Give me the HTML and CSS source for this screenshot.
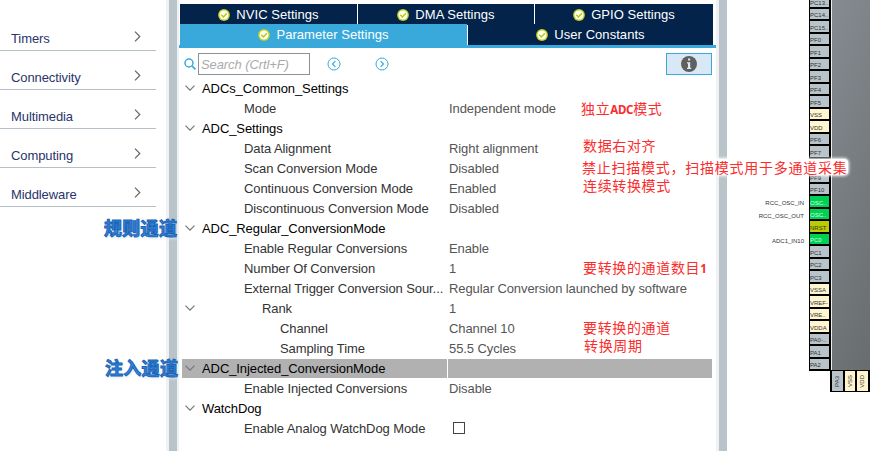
FILE: index.html
```html
<!DOCTYPE html>
<html lang="en">
<head>
<meta charset="utf-8">
<title>ADC1 Configuration</title>
<link rel="stylesheet" href="styles.css">
</head>
<body>
<svg width="0" height="0" class="defs">
  <symbol id="ok" viewBox="0 0 12 12"><circle cx="6" cy="6" r="5.9" fill="#c3d21f"/><circle cx="6" cy="6" r="4.5" fill="#fffff4"/><path d="M3.3 5.7 5.4 8 8.9 4.2" fill="none" stroke="#b6c81c" stroke-width="1.5"/></symbol>
  <symbol id="down" viewBox="0 0 10 6"><path d="M.5.7 5 5.2 9.5.7" fill="none" stroke="#777" stroke-width="1.2"/></symbol>
  <symbol id="right" viewBox="0 0 7 11"><path d="M1 .7 5.8 5.5 1 10.3" fill="none" stroke="#666" stroke-width="1.2"/></symbol>
</svg>
<div class="app">
  <nav class="categories">
    <div class="category"><span>Timers</span><svg><use href="#right"/></svg></div>
    <div class="category"><span>Connectivity</span><svg><use href="#right"/></svg></div>
    <div class="category"><span>Multimedia</span><svg><use href="#right"/></svg></div>
    <div class="category"><span>Computing</span><svg><use href="#right"/></svg></div>
    <div class="category"><span>Middleware</span><svg><use href="#right"/></svg></div>
  </nav>
  <div class="splitter"></div>
  <main class="config">
    <div class="tabs top">
      <div class="tab"><svg><use href="#ok"/></svg>NVIC Settings</div>
      <div class="tab"><svg><use href="#ok"/></svg>DMA Settings</div>
      <div class="tab"><svg><use href="#ok"/></svg>GPIO Settings</div>
    </div>
    <div class="tabs bottom">
      <div class="tab active"><svg><use href="#ok"/></svg>Parameter Settings</div>
      <div class="tab"><svg><use href="#ok"/></svg>User Constants</div>
    </div>
    <div class="tabline"></div>
    <div class="toolbar">
      <svg class="lens" viewBox="0 0 12 12"><circle cx="5" cy="5" r="4" fill="none" stroke="#39a9dc" stroke-width="1.5"/><path d="m8 8 3.4 3.4" stroke="#39a9dc" stroke-width="1.7"/></svg>
      <div class="search">Search (Crtl+F)</div>
      <svg class="step prev" viewBox="0 0 14 14"><circle cx="7" cy="7" r="6" fill="none" stroke="#39a9dc"/><path d="M8.3 4.2 5.5 7l2.8 2.8" fill="none" stroke="#39a9dc" stroke-width="1.2"/></svg>
      <svg class="step next" viewBox="0 0 14 14"><circle cx="7" cy="7" r="6" fill="none" stroke="#39a9dc"/><path d="M5.7 4.2 8.5 7 5.7 9.8" fill="none" stroke="#39a9dc" stroke-width="1.2"/></svg>
      <div class="info"><svg viewBox="0 0 16 16"><circle cx="8" cy="8" r="8" fill="#5f5f5f"/><path d="M7 2.6h2.200v2H7zM6 6.200h3.200v5.600h1V13H6v-1.200h1V7.400H6z" fill="#d9e8f5"/></svg></div>
    </div>
    <div class="tree">
      <div class="row group"><svg><use href="#down"/></svg><span class="name">ADCs_Common_Settings</span></div>
      <div class="row"><span class="name">Mode</span><span class="value">Independent mode</span></div>
      <div class="row group"><svg><use href="#down"/></svg><span class="name">ADC_Settings</span></div>
      <div class="row"><span class="name">Data Alignment</span><span class="value">Right alignment</span></div>
      <div class="row"><span class="name">Scan Conversion Mode</span><span class="value">Disabled</span></div>
      <div class="row"><span class="name">Continuous Conversion Mode</span><span class="value">Enabled</span></div>
      <div class="row"><span class="name">Discontinuous Conversion Mode</span><span class="value">Disabled</span></div>
      <div class="row group"><svg><use href="#down"/></svg><span class="name">ADC_Regular_ConversionMode</span></div>
      <div class="row"><span class="name">Enable Regular Conversions</span><span class="value">Enable</span></div>
      <div class="row"><span class="name">Number Of Conversion</span><span class="value">1</span></div>
      <div class="row"><span class="name">External Trigger Conversion Sour...</span><span class="value">Regular Conversion launched by software</span></div>
      <div class="row rank"><svg><use href="#down"/></svg><span class="name">Rank</span><span class="value">1</span></div>
      <div class="row deep"><span class="name">Channel</span><span class="value">Channel 10</span></div>
      <div class="row deep"><span class="name">Sampling Time</span><span class="value">55.5 Cycles</span></div>
      <div class="row group selected"><svg><use href="#down"/></svg><span class="name">ADC_Injected_ConversionMode</span><span class="value"></span></div>
      <div class="row"><span class="name">Enable Injected Conversions</span><span class="value">Disable</span></div>
      <div class="row group"><svg><use href="#down"/></svg><span class="name">WatchDog</span></div>
      <div class="row"><span class="name">Enable Analog WatchDog Mode</span><span class="value"><i class="check"></i></span></div>
    </div>
  </main>
  <div class="splitter right"></div>
  <section class="pinout">
    <div class="signals"><span>RCC_OSC_IN</span><span>RCC_OSC_OUT</span><span class="adc">ADC1_IN10</span></div>
    <div class="pins">
      <div class="pin">PC13..</div><div class="pin">PC14..</div><div class="pin">PC15..</div><div class="pin">PF0</div><div class="pin">PF1</div><div class="pin">PF2</div><div class="pin">PF3</div><div class="pin">PF4</div><div class="pin">PF5</div><div class="pin power">VSS</div><div class="pin power">VDD</div><div class="pin">PF6</div><div class="pin">PF7</div><div class="pin"></div><div class="pin">PF9</div><div class="pin">PF10</div><div class="pin used">OSC..</div><div class="pin used">OSC..</div><div class="pin reset">NRST</div><div class="pin used">PC0</div><div class="pin">PC1</div><div class="pin">PC2</div><div class="pin">PC3</div><div class="pin power">VSSA</div><div class="pin power">VREF-</div><div class="pin power">VRE..</div><div class="pin power">VDDA</div><div class="pin">PA0-..</div><div class="pin">PA1</div><div class="pin">PA2</div>
    </div>
    <div class="body">
      <div class="chip"></div>
      <div class="vpins"><div class="vpin"><span>PA3</span></div><div class="vpin power"><span>VSS</span></div><div class="vpin power"><span>VDD</span></div><div class="vpin"></div></div>
    </div>
  </section>
</div>
<div class="note n1">独立<b>ADC</b>模式</div>
<div class="note n2">数据右对齐</div>
<div class="note n3">禁止扫描模式，扫描模式用于多通道采集</div>
<div class="note n4">连续转换模式</div>
<div class="note n5">要转换的通道数目<b>1</b></div>
<div class="note n6">要转换的通道</div>
<div class="note n7">转换周期</div>
<div class="mark m1">规则通道</div>
<div class="mark m2">注入通道</div>
</body>
</html>
```
FILE: styles.css
```css
* { box-sizing: border-box; }
body { margin: 0; width: 870px; height: 451px; overflow: hidden; background: #fff; font: 13px/20px "Liberation Sans", Arial, sans-serif; letter-spacing: -.09px; color: #333; white-space: nowrap; }
svg { display: block; flex: none; }
.defs { position: absolute; }
.app { display: flex; height: 451px; }
.app > * { flex: none; }

.categories { width: 166px; padding-top: 12px; }
.category { display: flex; justify-content: space-between; width: 156px; height: 39px; padding: 17px 15px 0 11px; border-bottom: 1px solid #b5bfc6; color: #29356a; }
.category svg { width: 7px; height: 11px; margin-top: 2px; }

.splitter { width: 13px; background: #b9c4ca; border: solid #eff1f2; border-width: 0 2px 0 3px; }
.splitter.right { width: 11px; border-width: 0 0 0 3px; }

.config { width: 537px; padding-top: 4px; }
.tabs { display: grid; gap: 1px; width: 534px; margin-left: 1px; color: #fff; letter-spacing: .05px; }
.tabs.top { grid-template-columns: 177px 176px 178px; height: 19px; margin-bottom: 1px; }
.tabs.bottom { grid-template-columns: 287px 245px; height: 21px; }
.tab { display: flex; align-items: center; justify-content: center; background: #03234b; padding-top: 1px; }
.tab.active { background: #39a9dc; }
.tab svg { width: 12px; height: 12px; margin-right: 6px; }
.tabline { height: 3px; background: #39a9dc; }

.toolbar { display: flex; align-items: center; height: 22px; margin-top: 5px; padding: 0 4px 0 5px; }
.lens { width: 12px; height: 12px; margin-right: 2px; }
.search { width: 112px; height: 22px; border: 1px solid #8b9297; padding: 1px 2px; color: #aaa; font-style: italic; }
.step { width: 14px; height: 14px; }
.prev { margin-left: 17px; }
.next { margin-left: 34px; }
.info { display: grid; place-items: center; width: 46px; height: 22px; margin-left: auto; border: 1px solid #39a9dc; background: #d9e8f5; }
.info svg { width: 16px; height: 16px; }

.tree { display: grid; grid-auto-rows: 19px; row-gap: 1px; width: 530px; margin: 4px 0 0 3px; }
.row { display: grid; grid-template-columns: 265px 264px; grid-template-rows: 19px; column-gap: 1px; }
.name { grid-area: 1 / 1; padding-left: 62px; }
.value { grid-area: 1 / 2; padding-left: 1px; color: #555; }
.row svg { grid-area: 1 / 1; width: 10px; height: 6px; margin: 6px 0 0 3px; }
.group .name { padding-left: 20px; color: #000; }
.rank .name { padding-left: 80px; }
.deep .name { padding-left: 98px; }
.selected .name, .selected .value { background: #b1b1b1; }
.selected svg { z-index: 1; }
.check { display: block; width: 12px; height: 12px; margin: 3px 0 0 4px; border: 1px solid #444; }

.app .pinout { display: flex; flex: 1; font-size: 6px; line-height: 8px; letter-spacing: 0; }
.signals { display: flex; flex-direction: column; width: 82px; padding: 199px 5px 0 0; text-align: right; gap: 5px; }
.signals .adc { margin-top: 12px; }
.pins { width: 22px; height: 375px; margin-top: -4px; }
.pin { display: flex; align-items: flex-end; height: 12.5px; padding-left: 0; border: solid #000; border-width: 0 2px 2px 1px; background: #b9c4ca; overflow: hidden; line-height: 7px; }
.power { background: #fff6cf; }
.used { background: #00d053; color: #d8ffe4; }
.reset { background: #bbcc00; }
.body { flex: 1; min-width: 0; }
.chip { height: 370px; border-left: 1px solid #eee; background: linear-gradient(110deg, #858c91, #666a6c); }
.vpins { display: flex; width: 52px; height: 22px; margin-left: -1px; border-top: 1px solid #000; }
.vpin { display: grid; place-items: center; flex: none; width: 12.5px; border: solid #000; border-width: 0 0 1px 2px; background: #b9c4ca; }
.vpin.power { background: #fff6cf; }
.vpin span { writing-mode: vertical-rl; transform: rotate(180deg); }

.note, .mark { position: absolute; }
.note { font: 14px/20px "Noto Sans CJK SC", sans-serif; letter-spacing: .65px; color: #fb2c2c; }
.note b { font: bold 11.5px "Noto Sans", sans-serif; letter-spacing: -.3px; }
.n1 { left: 581px; top: 98px; }
.n2 { left: 583px; top: 135px; }
.n3 { left: 582px; top: 159px; line-height: 16px; letter-spacing: .75px; background: #fff; border-radius: 4px; box-shadow: 0 0 3px 1px #fff; }
.n4 { left: 583px; top: 175px; }
.n5 { left: 583px; top: 257px; }
.n6 { left: 583px; top: 317px; }
.n7 { left: 584px; top: 335px; }
.mark { font: bold 18px/24px "Noto Sans CJK SC", sans-serif; letter-spacing: .3px; color: #2f86df; -webkit-text-stroke: 1px #1c63b4; text-shadow: 1px 2px 3px #dfe8f2; }
.m1 { left: 104px; top: 215px; }
.m2 { left: 105px; top: 355px; }
```
